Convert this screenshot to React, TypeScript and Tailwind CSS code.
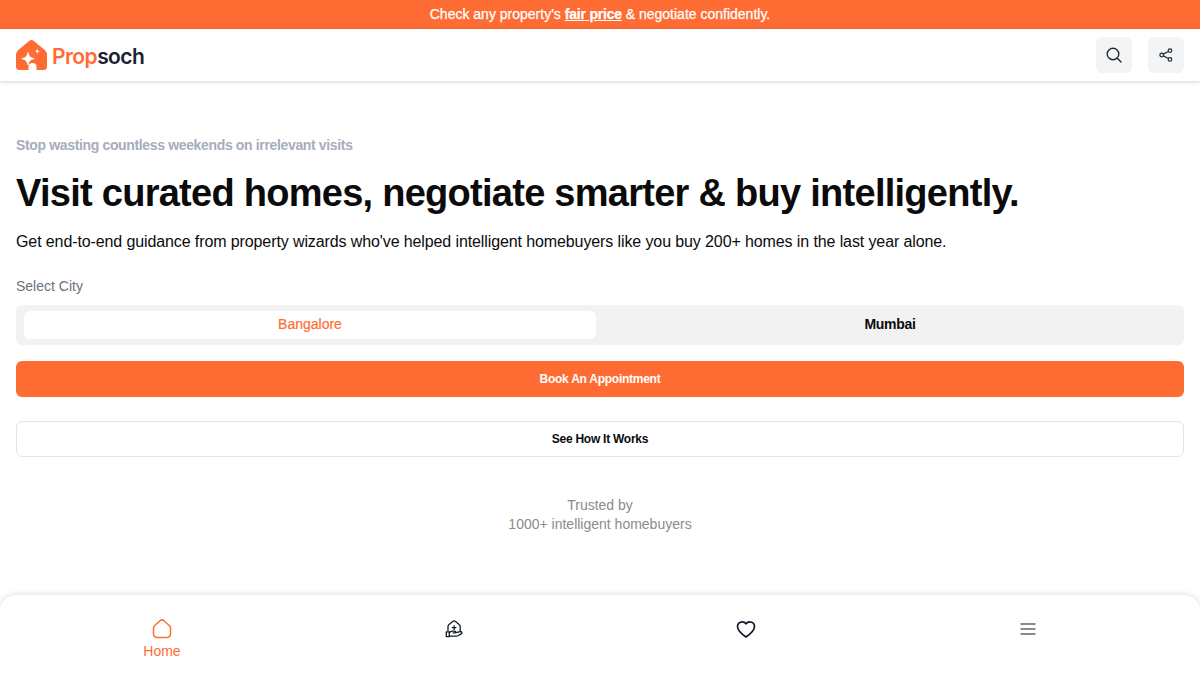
import React from "react";

const Logo = () => (
  <svg width="31" height="31" viewBox="0 0 31 31" fill="none">
    <path d="M12.800 1.200a4 4 0 0 1 5.400 0l10.800 9a6 6 0 0 1 2 4.400V26.500a3.500 3.500 0 0 1-3.500 3.500H20.500v-3a4 4 0 0 0-8 0v3H3.500A3.500 3.500 0 0 1 0 26.500V14.600a6 6 0 0 1 2-4.400z" fill="#FF6C33" />
    <path d="M12 12.500c.9 4 2.200 5.300 6.200 6.200-4 .9-5.300 2.200-6.200 6.200-.9-4-2.200-5.300-6.200-6.200 4-.9 5.300-2.200 6.200-6.200z" fill="#fff" stroke="#fff" strokeWidth="0.800" strokeLinejoin="round" />
    <path d="M21.300 8.500c.4 1.900.9 2.400 2.700 2.700-1.800.4-2.300.9-2.700 2.700-.4-1.800-.9-2.300-2.700-2.700 1.800-.3 2.300-.8 2.700-2.700z" fill="#fff" />
  </svg>
);

const HomeDeal = () => (
  <svg width="20" height="20" viewBox="0 0 20 20" fill="none" stroke="#111827" strokeWidth="1.300" strokeLinecap="round" strokeLinejoin="round">
    <path d="M4 11.500V7.500c0-.7.3-1.300.8-1.700l3.900-3.300a2.200 2.200 0 0 1 2.800 0l3.900 3.300c.5.400.8 1 .8 1.700v5" />
    <path d="M10.100 6.800v3.600M8.300 8.600h3.600" />
    <path d="M5.300 13.300l2.100-.9c.5-.2 1-.3 1.600-.3h1.800c1.100 0 1.100 1.700 0 1.700H9.100M11.800 13.600l4.600-1c1.400-.3 2.100 1.300 1 2l-3.300 2.100c-.5.300-1 .4-1.600.4H5.300" />
    <path d="M2.300 12.800h3v4.800h-3z" />
  </svg>
);

export default function App() {
  return (
    <div className="h-[675px] bg-white flex flex-col overflow-hidden font-['Liberation_Sans',sans-serif] text-[#0b0b0b]">
      <div className="h-[29px] shrink-0 bg-[#ff6c33] flex items-center justify-center pb-[2px] text-white text-sm [-webkit-text-stroke:0.25px_#fff]">
        <p>
          Check any property's <span className="font-bold underline tracking-[-0.2px]">fair price</span> &amp; negotiate confidently.
        </p>
      </div>

      <header className="h-[52px] shrink-0 bg-white shadow-[0_1px_4px_rgba(0,0,0,0.18)] flex items-center justify-between px-4">
        <div className="flex items-center gap-[5px]">
          <Logo />
          <span className="font-['Inter',sans-serif] font-semibold text-[21px] tracking-[-0.55px] leading-none pt-[2px]">
            <span className="text-[#ff6c33]">Prop</span>
            <span className="text-[#1c2130]">soch</span>
          </span>
        </div>
        <div className="flex items-center gap-4">
          <button className="w-[36px] h-[36px] rounded-md bg-[#f3f4f6] flex items-center justify-center">
            <svg width="16" height="16" viewBox="0 0 16 16" fill="none" stroke="#1f2937" strokeWidth="1.400" strokeLinecap="round">
              <circle cx="7" cy="7" r="5.800" />
              <path d="M11.300 11.300L15 15" />
            </svg>
          </button>
          <button className="w-[36px] h-[36px] rounded-md bg-[#f3f4f6] flex items-center justify-center">
            <svg width="14" height="14" viewBox="0 0 14 14" fill="none" stroke="#1f2937" strokeWidth="1.200">
              <circle cx="11" cy="2.600" r="1.800" />
              <circle cx="2.700" cy="7" r="1.800" />
              <circle cx="11" cy="11.400" r="1.800" />
              <path d="M4.300 6.100l5.100-2.600M4.300 7.900l5.100 2.600" />
            </svg>
          </button>
        </div>
      </header>

      <main className="flex-1 px-4 pt-[54px]">
        <p className="text-sm leading-[20px] font-bold tracking-[-0.35px] text-[#a6adbb]">Stop wasting countless weekends on irrelevant visits</p>
        <h1 className="mt-[15px] text-[38px] leading-[46px] font-bold tracking-[-0.73px]">
          Visit curated homes, negotiate smarter &amp; buy intelligently.
        </h1>
        <p className="mt-[14px] text-base leading-[24px] tracking-[-0.108px] text-[#0b0b0b]">
          Get end-to-end guidance from property wizards who've helped intelligent homebuyers like you buy 200+ homes in the last year alone.
        </p>

        <p className="mt-[22px] text-sm leading-[20px] text-[#6b7280]">Select City</p>
        <div className="mt-[9px] h-[40px] rounded-md bg-[#f2f2f2] flex py-[6px] pl-2">
          <button className="w-[572px] rounded-md bg-white pb-[2px] text-sm text-[#ff6c33] [-webkit-text-stroke:0.2px_#ff6c33]">Bangalore</button>
          <button className="flex-1 rounded-md pb-[2px] text-sm font-bold tracking-[-0.3px] text-[#0b0b0b]">Mumbai</button>
        </div>

        <button className="mt-4 w-full h-[36px] rounded-md bg-[#ff6c33] text-white text-xs font-bold tracking-[-0.26px]">Book An Appointment</button>
        <button className="mt-6 w-full h-[36px] rounded-md bg-white border border-[#e2e4e8] text-[#0b0b0b] text-xs font-bold tracking-[-0.25px]">See How It Works</button>

        <div className="mt-[39px] text-center text-sm leading-[19px] text-[#8b8b8b]">
          <p>Trusted by</p>
          <p>1000+ intelligent homebuyers</p>
        </div>
      </main>

      <nav className="h-[80px] shrink-0 rounded-t-2xl bg-white shadow-[0_-1px_6px_rgba(0,0,0,0.12)] grid grid-cols-4 pt-[24px] px-4">
        <button className="flex flex-col items-center justify-start text-[#ff6c33]">
          <svg width="20" height="20" viewBox="0 0 20 20" fill="none" stroke="#ff6c33" strokeWidth="1.500" strokeLinejoin="round">
            <path d="M1.500 9a3 3 0 0 1 1-2.200l5.500-5a3 3 0 0 1 4 0l5.500 5a3 3 0 0 1 1 2.200v6a3.500 3.500 0 0 1-3.500 3.500H5a3.500 3.500 0 0 1-3.500-3.500z" />
          </svg>
          <span className="text-sm leading-[20px] mt-[2px]">Home</span>
        </button>
        <button className="flex justify-center items-start"><HomeDeal /></button>
        <button className="flex justify-center items-start">
          <svg width="20" height="20" viewBox="0 0 20 20" fill="none" stroke="#111827" strokeWidth="1.700" strokeLinejoin="round">
            <path d="M10 18C5 14.500 1.500 11.500 1.500 7.500A4.700 4.700 0 0 1 6.200 2.800c1.500 0 3 .7 3.800 2 .8-1.300 2.300-2 3.800-2a4.700 4.700 0 0 1 4.700 4.700c0 4-3.500 7-8.500 10.500z" />
          </svg>
        </button>
        <button className="flex justify-center items-start pr-5">
          <svg width="20" height="20" viewBox="0 0 20 20" fill="none" stroke="#111827" strokeWidth="1.200">
            <path d="M2.500 5h15M2.500 10h15M2.500 15h15" />
          </svg>
        </button>
      </nav>
    </div>
  );
}
